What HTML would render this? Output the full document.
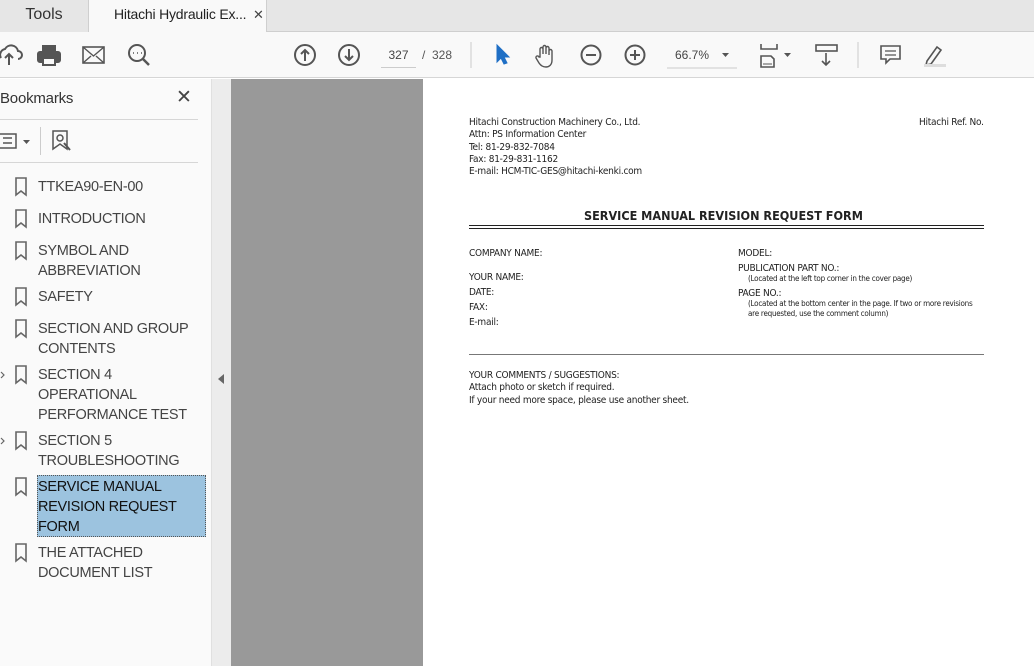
<!DOCTYPE html>
<html><head><meta charset="utf-8"><style>
*{margin:0;padding:0;box-sizing:border-box}
body{width:1034px;height:666px;overflow:hidden;font-family:"Liberation Sans",sans-serif;background:#fff;position:relative}
.abs{position:absolute}
.tabbar{left:0;top:0;width:1034px;height:32px;background:#e6e6e6;border-bottom:1px solid #cfcfcf}
.tab1{left:0;top:0;width:89px;height:32px;background:#e6e6e6;border-right:1px solid #cfcfcf;font-size:16px;color:#333;text-align:center;line-height:29px}
.tab2{left:89px;top:0;width:178px;height:33px;background:#f9f9f9;border-right:1px solid #cfcfcf;font-size:14px;color:#222;line-height:29px;padding-left:25px;white-space:nowrap;letter-spacing:-0.2px}
.toolbar{left:0;top:32px;width:1034px;height:46px;background:#f9f9f9;border-bottom:1px solid #d6d6d6}
.side{left:0;top:79px;width:212px;height:587px;background:#fafafa;border-right:1px solid #e0e0e0}
.strip{left:212px;top:79px;width:19px;height:587px;background:#ececec}
.gray{left:231px;top:79px;width:192px;height:587px;background:#999}
.page{left:423px;top:79px;width:611px;height:587px;background:#fff}
.bm{position:absolute;left:38px;font-size:14.5px;line-height:20px;color:#444;letter-spacing:-0.3px;white-space:nowrap}
.pt{position:absolute;font-size:10px;color:#222;white-space:nowrap;font-family:"DejaVu Sans Condensed","Liberation Sans Narrow","Liberation Sans",sans-serif;letter-spacing:-0.25px}
.sm{font-size:8px}
svg{position:absolute}
</style></head><body>
<div class="abs tabbar"></div>
<div class="abs tab1">Tools</div>
<div class="abs tab2">Hitachi Hydraulic Ex... <span style="font-size:13px;margin-left:3px;color:#444">✕</span></div>
<div class="abs toolbar"></div>
<svg style="left:0;top:40px" width="1034" height="32" viewBox="0 40 1034 32" fill="none" stroke="#555" stroke-width="2">
<path d="M1 58 a6 6 0 0 1 4-9 a7 7 0 0 1 13 2 a4 4 0 0 1 0 8" /><path d="M9 65 v-11 m-4 4 l4-4 4 4"/>
<rect x="38" y="52" width="22" height="10" rx="2" fill="#555"/><rect x="42" y="45" width="14" height="6" fill="#555" stroke="none"/><rect x="43" y="58" width="12" height="7" fill="#f9f9f9"/>
<rect x="83" y="47" width="21" height="16" stroke-width="1.6"/><path d="M83 47 l10.5 9 10.5-9 M83 63 l8-7 M104 63 l-8-7" stroke-width="1.4"/>
<circle cx="137" cy="53" r="8"/><path d="M143 59 l6 6" stroke-width="2.5"/><path d="M133 53h1M137 53h1M141 53h1" stroke-width="1.6"/>
<circle cx="305" cy="55" r="10"/><path d="M305 61v-11m-4 4l4-4 4 4"/>
<circle cx="349" cy="55" r="10"/><path d="M349 49v11m-4-4l4 4 4-4"/>
<path d="M471 42v26" stroke="#ccc" stroke-width="1"/>
<path d="M497 45 l0 17 4-4 3 6 3-1-3-6 5 0z" fill="#1f6fc5" stroke="#1f6fc5" stroke-width="1"/>
<path d="M540 57v-8a1.5 1.5 0 0 1 3 0v5 -7a1.5 1.5 0 0 1 3 0v7-6a1.5 1.5 0 0 1 3 0v7-4a1.5 1.5 0 0 1 3 0v9c0 5-3 7-6 7s-5-1-7-4l-3-5a1.5 1.5 0 0 1 3-1z" stroke-width="1.4"/>
<circle cx="591" cy="55" r="9.5"/><path d="M586 55h10"/>
<circle cx="635" cy="55" r="9.5"/><path d="M630 55h10M635 50v10"/>
<path d="M667 68h70" stroke="#ccc" stroke-width="1"/><path d="M722 53h7l-3.5 4z" fill="#555" stroke="none"/>
<path d="M761 44v5h16v-5M761 67v-11h10l3 3v8z" stroke-width="1.6"/><path d="M763 64h9" stroke-width="1"/><path d="M784 53h7l-3.5 4z" fill="#555" stroke="none"/>
<rect x="816" y="45" width="21" height="6" stroke-width="1.6"/><path d="M826 53v12m-4-4l4 4 4-4" stroke-width="1.6"/>
<path d="M858 42v26" stroke="#ccc" stroke-width="1"/>
<path d="M881 46h19v13h-10l-4 4v-4h-5z" stroke-width="1.6"/><path d="M885 51h11M885 55h11" stroke-width="1.2"/>
<path d="M927 61l10-14 4 3-10 14-5 1z" stroke-width="1.6"/><rect x="924" y="64" width="22" height="3" fill="#ddd" stroke="none"/>
</svg>
<div class="abs" style="left:381px;top:46px;width:35px;font-size:12px;color:#444;text-align:center;border-bottom:1px solid #ccc;height:22px;line-height:18px">327</div>
<div class="abs" style="left:422px;top:46px;font-size:12px;color:#555;line-height:18px">/&nbsp; 328</div>
<div class="abs" style="left:675px;top:46px;font-size:12px;color:#444;line-height:18px">66.7%</div>

<div class="abs side"></div>
<div class="abs" style="left:0;top:90px;font-size:15px;color:#333;letter-spacing:-0.2px">Bookmarks</div>
<div class="abs" style="left:176px;top:86px;font-size:19px;color:#444">✕</div>
<div class="abs" style="left:0;top:119px;width:198px;height:1px;background:#d6d6d6"></div>
<div class="abs" style="left:0;top:162px;width:198px;height:1px;background:#d6d6d6"></div>
<div class="abs" style="left:40px;top:127px;width:1px;height:28px;background:#ccc"></div>
<svg style="left:0;top:128px" width="80" height="26" fill="none" stroke="#555" stroke-width="1.5">
<rect x="-3" y="6" width="19" height="14"/><path d="M3 10h9M3 15h9"/><path d="M23 12h7l-3.5 4z" fill="#555" stroke="none"/>
<path d="M53 3h14v18l-7-5-7 5z"/><circle cx="60" cy="10" r="3"/><path d="M64 15l6 7" stroke-width="2"/>
</svg>
<svg style="left:0;top:0" width="212" height="666" fill="none" stroke="#666" stroke-width="1.6">
<g id="b"><path d="M16 178h10v17l-5-4-5 4z"/></g>
<use href="#b" y="32"/><use href="#b" y="64"/><use href="#b" y="110"/><use href="#b" y="142"/><use href="#b" y="188"/><use href="#b" y="254"/><use href="#b" y="300"/><use href="#b" y="366"/>
<path d="M1 372l3 3-3 3M1 438l3 3-3 3" stroke-width="1.2"/>
</svg>
<div class="bm" style="top:177px">TTKEA90-EN-00</div>
<div class="bm" style="top:209px">INTRODUCTION</div>
<div class="bm" style="top:241px">SYMBOL AND<br>ABBREVIATION</div>
<div class="bm" style="top:287px">SAFETY</div>
<div class="bm" style="top:319px">SECTION AND GROUP<br>CONTENTS</div>
<div class="bm" style="top:365px">SECTION 4<br>OPERATIONAL<br>PERFORMANCE TEST</div>
<div class="bm" style="top:431px">SECTION 5<br>TROUBLESHOOTING</div>
<div class="abs" style="left:37px;top:475px;width:169px;height:62px;background:#9cc3df;border:1px dotted #555"></div>
<div class="bm" style="top:477px;color:#111">SERVICE MANUAL<br>REVISION REQUEST<br>FORM</div>
<div class="bm" style="top:543px">THE ATTACHED<br>DOCUMENT LIST</div>

<div class="abs strip"></div>
<svg style="left:217px;top:373px" width="8" height="12"><path d="M7 1v10l-6-5z" fill="#666"/></svg>
<div class="abs gray"></div>
<div class="abs page"></div>
<div class="pt" style="left:469px;top:117px;line-height:12.3px">Hitachi Construction Machinery Co., Ltd.<br>Attn: PS Information Center<br>Tel: 81-29-832-7084<br>Fax: 81-29-831-1162<br>E-mail: HCM-TIC-GES@hitachi-kenki.com</div>
<div class="pt" style="left:919px;top:117px">Hitachi Ref. No.</div>
<div class="pt" style="left:584px;top:208px;font-size:12.5px;font-weight:bold;letter-spacing:0">SERVICE MANUAL REVISION REQUEST FORM</div>
<div class="abs" style="left:469px;top:225px;width:515px;height:1px;background:#222"></div>
<div class="abs" style="left:469px;top:228px;width:515px;height:1px;background:#222"></div>
<div class="pt" style="left:469px;top:248px">COMPANY NAME:</div>
<div class="pt" style="left:469px;top:272px">YOUR NAME:</div>
<div class="pt" style="left:469px;top:287px">DATE:</div>
<div class="pt" style="left:469px;top:302px">FAX:</div>
<div class="pt" style="left:469px;top:317px">E-mail:</div>
<div class="pt" style="left:738px;top:248px">MODEL:</div>
<div class="pt" style="left:738px;top:263px">PUBLICATION PART NO.:</div>
<div class="pt sm" style="left:748px;top:274px">(Located at the left top corner in the cover page)</div>
<div class="pt" style="left:738px;top:288px">PAGE NO.:</div>
<div class="pt sm" style="left:748px;top:299px;line-height:10px">(Located at the bottom center in the page. If two or more revisions<br>are requested, use the comment column)</div>
<div class="abs" style="left:469px;top:354px;width:515px;height:1px;background:#777"></div>
<div class="pt" style="left:469px;top:370px;line-height:12.3px">YOUR COMMENTS / SUGGESTIONS:<br>Attach photo or sketch if required.<br>If your need more space, please use another sheet.</div>
</body></html>
